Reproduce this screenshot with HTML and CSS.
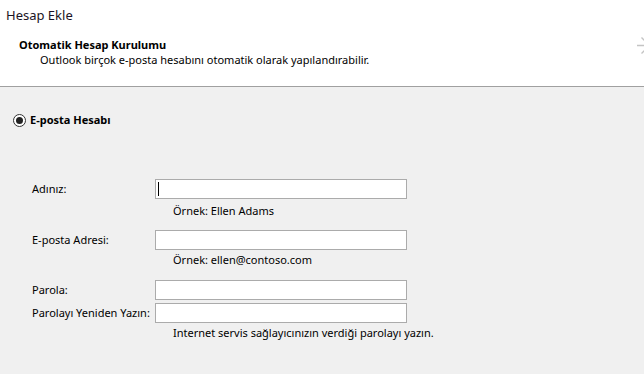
FILE: index.html
```html
<!DOCTYPE html>
<html lang="tr">
<head>
<meta charset="utf-8">
<title>Hesap Ekle</title>
<link rel="stylesheet" href="styles.css">
</head>
<body>
<div class="header">
  <div class="window-title">Hesap Ekle</div>
  <div class="heading">Otomatik Hesap Kurulumu</div>
  <div class="subheading">Outlook birçok e-posta hesabını otomatik olarak yapılandırabilir.</div>
  <svg class="arrow" width="20" height="20" viewBox="0 0 20 20"><path d="M1 9.5H14M5.5 1.5L13.5 9.5L5.5 17.5" fill="none" stroke="#c4c4c4" stroke-width="1.4"/></svg>
</div>
<div class="content">
  <div class="radio-row">
    <span class="radio"><span class="dot"></span></span>
    <span class="radio-label">E-posta Hesabı</span>
  </div>
  <div class="form">
    <div class="row">
      <span class="label">Adınız:</span>
      <div class="field"><span class="caret"></span></div>
    </div>
    <div class="hint hint-first">Örnek: Ellen Adams</div>
    <div class="row row-gap">
      <span class="label">E-posta Adresi:</span>
      <div class="field"></div>
    </div>
    <div class="hint hint-second">Örnek: ellen@contoso.com</div>
    <div class="row row-gap2">
      <span class="label">Parola:</span>
      <div class="field"></div>
    </div>
    <div class="row row-tight">
      <span class="label">Parolayı Yeniden Yazın:</span>
      <div class="field"></div>
    </div>
    <div class="hint hint-third">Internet servis sağlayıcınızın verdiği parolayı yazın.</div>
  </div>
</div>
</body>
</html>
```
FILE: styles.css
```css
html, body {
  margin: 0;
  padding: 0;
}
body {
  width: 644px;
  height: 374px;
  overflow: hidden;
  background: #f0f0f0;
  font-family: "Noto Sans", "Open Sans", sans-serif;
  font-size: 11px;
  line-height: 16px;
  color: #000;
}
.header {
  position: relative;
  background: #fff;
  height: 87px;
  border-bottom: 1px solid #a0a0a0;
  box-sizing: border-box;
  padding-top: 7px;
}
.window-title {
  padding-left: 6px;
  font-size: 13px;
  color: #1b1424;
}
.heading {
  margin-top: 15px;
  padding-left: 19px;
  font-weight: bold;
  line-height: 14px;
}
.subheading {
  padding-left: 40px;
  line-height: 15px;
}
.arrow {
  position: absolute;
  left: 636px;
  top: 36px;
}
.content {
  padding-top: 25px;
}
.radio-row {
  display: flex;
  align-items: center;
  padding-left: 13px;
  height: 16px;
}
.radio {
  width: 11px;
  height: 11px;
  border: 1px solid #333;
  border-radius: 50%;
  display: flex;
  align-items: center;
  justify-content: center;
  background: #fff;
}
.dot {
  width: 7px;
  height: 7px;
  border-radius: 50%;
  background: #222;
}
.radio-label {
  margin-left: 4px;
  font-weight: bold;
}
.form {
  margin-top: 51px;
}
.row {
  display: flex;
  align-items: center;
  height: 20px;
}
.label {
  width: 123px;
  padding-left: 32px;
  white-space: nowrap;
}
.field {
  width: 248px;
  height: 18px;
  border: 1px solid #ababab;
  background: #fff;
  display: flex;
  align-items: center;
  padding-left: 2px;
  box-sizing: content-box;
}
.caret {
  width: 1px;
  height: 14px;
  background: #000;
}
.hint {
  padding-left: 173px;
}
.hint-first {
  margin-top: 4px;
}
.row-gap {
  margin-top: 11px;
}
.hint-second {
  margin-top: 2px;
}
.row-gap2 {
  margin-top: 12px;
}
.row-tight {
  margin-top: 3px;
}
.hint-third {
  margin-top: 2px;
}
```
